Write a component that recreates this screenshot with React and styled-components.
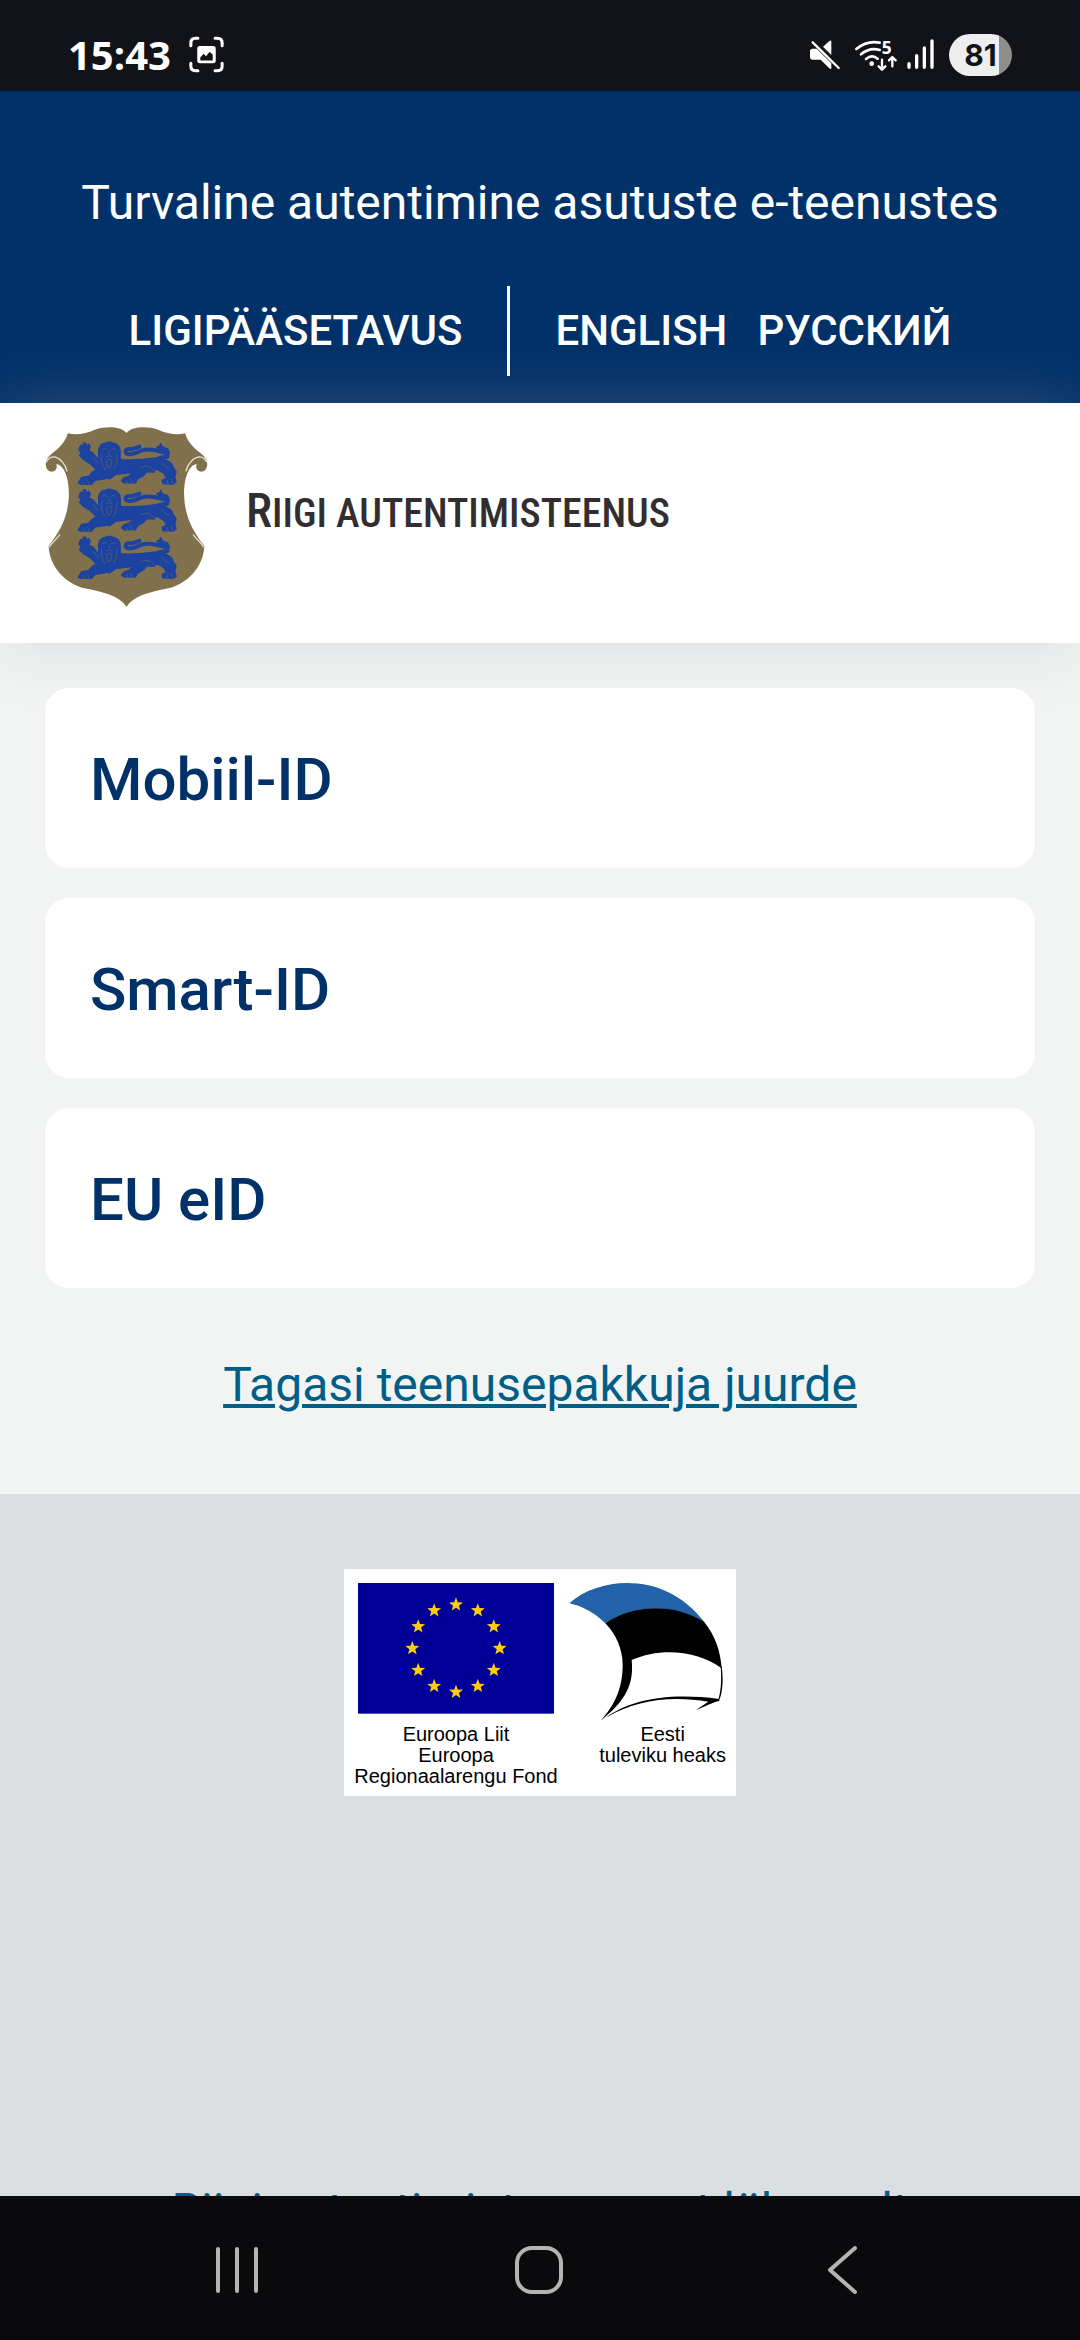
import React from "react";
import styled, { createGlobalStyle } from "styled-components";

const navy = "#003168";
const linkBlue = "#005e87";
const statusDark = "#121318";

const GlobalStyle = createGlobalStyle`
  *, *::before, *::after { box-sizing: border-box; }
  body {
    margin: 0;
    background: #f1f4f3;
    font-family: Roboto, "Liberation Sans", sans-serif;
  }
  svg { display: block; flex: none; overflow: visible; }
`;

const Screen = styled.div`
  display: flex;
  flex-direction: column;
  height: 100vh;
  overflow: hidden;
`;

const StatusBar = styled.div`
  display: flex;
  align-items: center;
  justify-content: space-between;
  flex: none;
  height: 91px;
  padding: 18px 68px 0;
  background: ${statusDark};
  color: #fff;
`;

const StatusGroup = styled.div`
  display: flex;
  align-items: center;
  gap: ${(p) => p.$gap}px;
`;

const Clock = styled.time`
  font: 700 40px/48px "Open Sans", sans-serif;
`;

const Battery = styled.span`
  width: 63px;
  border-radius: 21px;
  background: linear-gradient(to right, #eee 80%, #8e8e8e 80%);
  color: ${statusDark};
  font: 700 30px/42px Inter, sans-serif;
  text-align: center;
`;

const Page = styled.div`
  flex: 1;
  min-height: 0;
  overflow: hidden;
  background: #f1f4f3;
`;

const TopBanner = styled.header`
  padding: 76px 45px 27px;
  background: ${navy};
  color: #fff;
`;

const BannerTitle = styled.p`
  margin: 0 0 47px;
  font-size: 48px;
  line-height: 72px;
  text-align: center;
`;

const BannerNav = styled.nav`
  display: flex;
  justify-content: center;
  height: 90px;
`;

const NavGroup = styled.div`
  display: flex;
  align-items: center;
  gap: 30px;
  padding: 0 45px;

  & + & { border-left: 3px solid #fff; }
`;

const NavLink = styled.a`
  color: inherit;
  font-size: 42px;
  font-weight: 500;
  line-height: 60px;
  text-decoration: none;
  text-transform: uppercase;
`;

const BrandBar = styled.div`
  display: flex;
  align-items: center;
  gap: 38px;
  padding: 24px 45px 36px;
  background: #fff;
  box-shadow: 0 0 60px rgba(160, 148, 168, 0.3);
`;

const BrandName = styled.div`
  padding-bottom: 10px;
  color: #322e30;
  font-family: "Roboto Condensed", Roboto, sans-serif;
  font-size: 40px;
  font-weight: 500;
  line-height: 52px;
  text-transform: uppercase;

  &::first-letter { font-size: 48px; }
`;

const Main = styled.main`
  display: flex;
  flex-direction: column;
  gap: 30px;
  padding: 45px 45px 73px;
`;

const MethodButton = styled.button`
  padding: 54px 45px 51px;
  border: 0;
  border-radius: 24px;
  background: #fff;
  color: ${navy};
  font: 500 60px/75px Roboto, sans-serif;
  text-align: left;
`;

const TextLink = styled.a`
  align-self: center;
  color: ${linkBlue};
  font-size: 48px;
  line-height: 72px;
  text-decoration: underline 4px;
  text-underline-offset: 3px;
`;

const BackLink = styled(TextLink)`
  margin-top: 31px;
`;

const Footer = styled.footer`
  display: flex;
  flex-direction: column;
  align-items: center;
  gap: 379px;
  min-height: 1000px;
  padding: 75px 45px;
  background: #dbdfe2;
`;

const FundPanel = styled.div`
  display: flex;
  gap: 11px;
  padding: 14px 10px 9px;
  background: #fff;
`;

const Fund = styled.figure`
  display: flex;
  flex-direction: column;
  align-items: ${(p) => p.$align};
  width: ${(p) => p.$width}px;
  margin: 0;
`;

const FundCaption = styled.figcaption`
  align-self: ${(p) => p.$align};
  color: #000;
  font: 20px/21px "Liberation Sans", Arial, sans-serif;
  text-align: center;
  white-space: nowrap;
`;

const SystemNav = styled.nav`
  display: flex;
  flex: none;
  height: 144px;
  padding: 4px 88px 0 86px;
  background: #0a0a0c;
`;

const SystemButton = styled.button`
  display: flex;
  flex: 1;
  align-items: center;
  justify-content: center;
  padding: 0;
  border: 0;
  background: none;
`;

const ScreenshotIcon = () => (
  <svg width="35" height="35" viewBox="549 114 101 104" fill="none" aria-hidden="true">
    <g stroke="#fff" strokeWidth="9" strokeLinecap="round">
      <path d="M553 140V132Q553 118 567 118H574" />
      <path d="M625 118H632Q646 118 646 132V140" />
      <path d="M553 192V200Q553 214 567 214H574" />
      <path d="M625 214H632Q646 214 646 200V192" />
    </g>
    <rect x="572" y="141" width="55" height="51" rx="8" fill="#fff" />
    <path d="M581 184V175L591 164L598 171L609 158L618 167V184Z" fill={statusDark} />
  </svg>
);

const MuteIcon = () => (
  <svg width="35" height="32" viewBox="150 118 105 96" aria-hidden="true">
    <path d="M150 155Q150 147 158 147H170L214 191V205Q214 210 208 206L182 180H158Q150 180 150 172Z" fill="#fff" />
    <path d="M189 141L208 124Q214 120 214 126V166Z" fill="#fff" />
    <path d="M158 128L236 205" stroke="#fff" strokeWidth="7" strokeLinecap="round" />
  </svg>
);

const WifiIcon = () => (
  <svg width="42" height="32" viewBox="286 118 126 96" fill="none" aria-hidden="true">
    <g stroke="#fff" strokeWidth="8" strokeLinecap="round" strokeLinejoin="round">
      <path d="M290 148Q322 121 360 129" />
      <path d="M304 164Q330 142 360 151" />
      <path d="M319 178Q337 163 354 177" />
      <path d="M367 180V208M357 200L367 210L377 200" strokeWidth="7" />
      <path d="M398 200V174M388 182L398 172L408 182" strokeWidth="7" />
    </g>
    <circle cx="336" cy="192" r="7" fill="#fff" />
    <text x="366" y="162" fill="#fff" fontFamily="Open Sans, sans-serif" fontSize="52" fontWeight="700">5</text>
  </svg>
);

const SignalIcon = () => (
  <svg width="32" height="32" viewBox="441 118 96 96" aria-hidden="true">
    <path d="M447 192V203M470 168V203M493 145V203M516 124V203" stroke="#fff" strokeWidth="10" strokeLinecap="round" />
  </svg>
);

const Lion = ({ y }) => (
  <g transform={`translate(0 ${y})`}>
    <g fill="#1c43a0" stroke="#1c43a0" strokeWidth="4" strokeLinejoin="round">
      <path d="M148 141L154 134L158 142L160 127L167 129L169 140L176 132L180 140L175 152L188 158L206 180L216 204L196 206L180 190L160 178L148 166L153 158L146 149Z" />
      <path d="M205 150Q208 130 228 128L237 125L247 128Q268 132 270 152L270 172L276 186L270 206L258 222L238 236L220 226L206 210L202 188L206 172Z" />
      <path d="M262 178Q320 182 384 172L412 182Q428 190 428 200L438 214L434 230L438 246L428 252L398 250L396 240L410 234L400 218L378 206L372 216L350 214L340 226L322 236L316 248L282 248L274 242L280 234L296 228L310 216L262 222Z" />
      <path d="M222 212L204 206L186 216L176 228L154 232L144 248L152 252L184 252L194 240L232 234Z" />
      <path d="M386 146L380 139L387 138L392 130L397 140L412 145L418 156L415 172L396 180L384 170L404 166L404 156Z" />
    </g>
    <path d="M398 156Q360 142 330 152Q292 170 286 155Q286 143 304 147L328 139" fill="none" stroke="#1c43a0" strokeWidth="12" strokeLinecap="round" strokeLinejoin="round" />
    <g fill="none" stroke="#80704c" strokeWidth="2.5" opacity="0.6">
      <path d="M216 148Q224 141 232 148M242 148Q250 141 258 148M237 152V164M228 170Q237 162 247 170" />
      <path d="M214 162Q210 190 225 208M260 162Q264 190 249 208M229 181Q237 172 246 181L240 202L232 202Z" />
      <path d="M187 170L206 192M158 244L162 253M172 240L177 253M288 240L293 250M302 236L306 250M411 240L414 252M424 236L427 251M330 203Q360 190 372 212M394 187Q402 200 418 206" />
    </g>
  </g>
);

const Crest = () => (
  <svg width="163" height="180" viewBox="45 80 488 541" role="img" aria-label="Eesti vapp">
    <path
      fill="#80704c"
      d="M289 98C308 77 352 78 384 88C412 100 438 105 465 99C472 124 492 144 512 159C527 171 534 184 531 197C529 210 520 215 511 214C500 212 496 202 500 192C482 192 462 222 462 282C464 345 484 388 523 437C520 505 468 552 415 565C362 576 312 586 289 620C266 586 216 576 163 565C110 552 58 505 55 437C94 388 114 345 116 282C116 222 96 192 78 192C82 202 78 212 67 214C58 215 49 210 47 197C44 184 51 171 66 159C86 144 106 124 113 99C140 105 166 100 194 88C226 78 270 77 289 98Z"
    />
    <g fill="none" stroke="#e2ddcf" strokeWidth="4" strokeLinecap="round">
      <path d="M468 212C473 190 490 172 507 170C517 170 525 176 529 184M490 404C500 418 512 426 521 440" />
      <path d="M110 212C105 190 88 172 71 170C61 170 53 176 49 184M88 404C78 418 66 426 57 440" />
    </g>
    <Lion y={0} />
    <Lion y={141} />
    <Lion y={283} />
  </svg>
);

const starPoints = (cx, cy, r) =>
  Array.from({ length: 10 }, (_, i) => {
    const radius = i % 2 ? r * 0.42 : r;
    const a = (Math.PI / 5) * i - Math.PI / 2;
    return `${(cx + radius * Math.cos(a)).toFixed(1)},${(cy + radius * Math.sin(a)).toFixed(1)}`;
  }).join(" ");

const EuFlag = () => (
  <svg width="196" height="141" viewBox="84 99 588 423" aria-hidden="true">
    <rect x="84" y="99" width="588" height="392" fill="#000099" />
    {Array.from({ length: 12 }, (_, i) => {
      const a = (Math.PI / 6) * i;
      return <polygon key={i} fill="#ffcc11" points={starPoints(378 + 131 * Math.sin(a), 295 - 131 * Math.cos(a), 22)} />;
    })}
  </svg>
);

const EstoniaMark = () => (
  <svg width="154" height="141" viewBox="717 99 462 423" aria-hidden="true">
    <path fill="#2162a9" d="M718 160C760 120 830 99 890 99C980 99 1060 135 1124 217C1030 160 910 162 826 220C790 185 755 168 718 160Z" />
    <path d="M826 220C910 162 1030 160 1122 215C1155 255 1172 305 1175 355C1100 300 990 292 905 330C912 400 890 450 812 512C850 470 878 420 878 345C878 300 860 255 826 220Z" />
    <path d="M1175 350C1180 385 1179 420 1169 448L1166 446C1173 420 1175 385 1172 350Z" />
    <path d="M828 503C900 450 1010 427 1168 447V453C1150 456 1125 470 1098 480L1135 455C1020 437 920 450 828 503Z" />
  </svg>
);

const RecentsIcon = () => (
  <svg width="48" height="48" viewBox="0 0 48 48" aria-hidden="true">
    <path d="M5 3V45M24 3V45M43 3V45" stroke="#b4b4b4" strokeWidth="4" strokeLinecap="round" />
  </svg>
);

const HomeIcon = () => (
  <svg width="48" height="48" viewBox="0 0 48 48" aria-hidden="true">
    <rect x="2" y="2" width="44" height="44" rx="15" fill="none" stroke="#b4b4b4" strokeWidth="4" />
  </svg>
);

const BackIcon = () => (
  <svg width="48" height="48" viewBox="0 0 48 48" fill="none" aria-hidden="true">
    <path d="M38 2L13 24L38 46" stroke="#b4b4b4" strokeWidth="4" strokeLinecap="round" strokeLinejoin="round" />
  </svg>
);

const methods = ["Mobiil-ID", "Smart-ID", "EU eID"];

export default function App() {
  return (
    <Screen>
      <GlobalStyle />
      <StatusBar>
        <StatusGroup $gap={18}>
          <Clock>15:43</Clock>
          <ScreenshotIcon />
        </StatusGroup>
        <StatusGroup $gap={10}>
          <MuteIcon />
          <WifiIcon />
          <SignalIcon />
          <Battery>81</Battery>
        </StatusGroup>
      </StatusBar>

      <Page>
        <TopBanner>
          <BannerTitle>Turvaline autentimine asutuste e-teenustes</BannerTitle>
          <BannerNav>
            <NavGroup>
              <NavLink href="#ligipaasetavus">Ligipääsetavus</NavLink>
            </NavGroup>
            <NavGroup>
              <NavLink href="#en" lang="en">English</NavLink>
              <NavLink href="#ru" lang="ru">Русский</NavLink>
            </NavGroup>
          </BannerNav>
        </TopBanner>

        <BrandBar>
          <Crest />
          <BrandName>Riigi autentimisteenus</BrandName>
        </BrandBar>

        <Main>
          {methods.map((name) => (
            <MethodButton key={name} type="button">{name}</MethodButton>
          ))}
          <BackLink href="#tagasi">Tagasi teenusepakkuja juurde</BackLink>
        </Main>

        <Footer>
          <FundPanel>
            <Fund $width={204} $align="center">
              <EuFlag />
              <FundCaption $align="center">
                Euroopa Liit<br />Euroopa<br />Regionaalarengu Fond
              </FundCaption>
            </Fund>
            <Fund $width={157} $align="flex-start">
              <EstoniaMark />
              <FundCaption $align="flex-end">
                Eesti<br />tuleviku heaks
              </FundCaption>
            </Fund>
          </FundPanel>
          <TextLink href="#lisainfo">Riigi autentimisteenusest lähemalt</TextLink>
        </Footer>
      </Page>

      <SystemNav aria-label="Android">
        <SystemButton type="button" aria-label="Recents"><RecentsIcon /></SystemButton>
        <SystemButton type="button" aria-label="Home"><HomeIcon /></SystemButton>
        <SystemButton type="button" aria-label="Back"><BackIcon /></SystemButton>
      </SystemNav>
    </Screen>
  );
}
